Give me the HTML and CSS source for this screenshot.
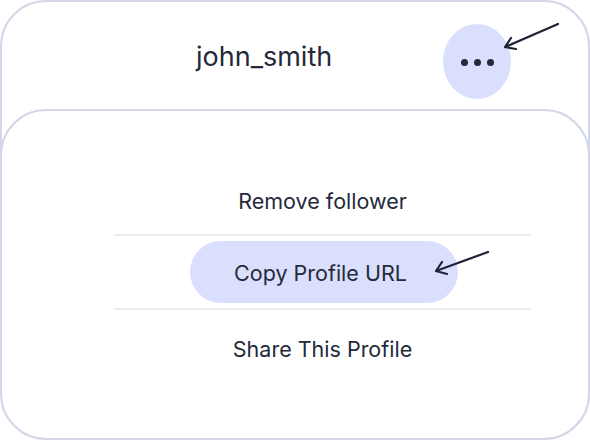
FILE: index.html
```html
<!DOCTYPE html>
<html>
<head>
<meta charset="utf-8">
<link rel="stylesheet" href="styles.css">
</head>
<body>
<div class="card">
  <div class="header">
    <span class="username">john_smith</span>
    <button class="more" aria-label="More options">
      <span class="dot"></span><span class="dot"></span><span class="dot"></span>
    </button>
  </div>
  <div class="sheet">
    <div class="menu">
      <div class="item item-first">Remove follower</div>
      <div class="divider"></div>
      <div class="pill">Copy Profile URL</div>
      <div class="divider"></div>
      <div class="item item-last">Share This Profile</div>
    </div>
  </div>
  <svg class="arrows" width="590" height="440" viewBox="0 0 590 440">
    <g fill="none" stroke="#1f2336" stroke-width="2.2" stroke-linecap="round" stroke-linejoin="round">
      <path d="M558 24 L505 47 M511 38 L505 47 L516 49"/>
      <path d="M488 252 L436 271 M442 262 L436 271 L447 274"/>
    </g>
  </svg>
</div>
</body>
</html>
```

FILE: styles.css
```css
html, body {
  margin: 0;
  padding: 0;
  background: #ffffff;
}

.card {
  position: relative;
  width: 590px;
  height: 440px;
  box-sizing: border-box;
  border: 2px solid #d4d7e7;
  border-radius: 46px;
  display: flex;
  flex-direction: column;
  overflow: hidden;
  font-family: Inter, "Noto Sans", sans-serif;
  color: #252a3a;
}

.header {
  height: 107px;
  flex: none;
  display: flex;
  align-items: flex-start;
  padding-left: 194px;
  box-sizing: border-box;
}

.username {
  font-size: 27px;
  line-height: 32px;
  margin-top: 39px;
  width: 247px;
}

.more {
  margin-top: 22px;
  width: 68px;
  height: 75px;
  border: none;
  border-radius: 50%;
  background: #d9dffc;
  display: flex;
  align-items: center;
  justify-content: center;
  gap: 6px;
  padding: 0;
  padding-top: 2px;
}

.dot {
  width: 7px;
  height: 7px;
  border-radius: 50%;
  background: #252a3a;
}

.sheet {
  flex: 1;
  margin: 0 -2px -2px -2px;
  border: 2px solid #d4d7e7;
  border-radius: 46px;
  padding: 0 57px 0 112px;
}

.menu {
  display: flex;
  flex-direction: column;
  padding-top: 60px;
}

.item {
  font-size: 21.5px;
  text-align: center;
  display: flex;
  align-items: center;
  justify-content: center;
}

.item-first {
  height: 59px;
  margin-bottom: 4px;
}

.item-last {
  height: 78px;
}

.divider {
  height: 2px;
  background: #ececf1;
}

.pill {
  margin: 5px auto 5px 76px;
  width: 268px;
  height: 62px;
  border-radius: 31px;
  background: #d9dffc;
  font-size: 21.5px;
  display: flex;
  align-items: center;
  justify-content: center;
  padding: 2px 7px 0 0;
  box-sizing: border-box;
}

.arrows {
  position: absolute;
  left: -2px;
  top: -2px;
  pointer-events: none;
}
```
